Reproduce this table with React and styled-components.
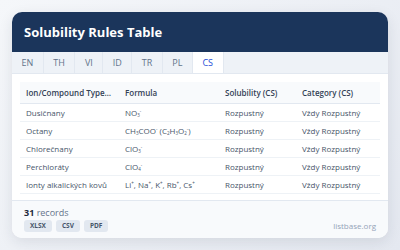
import styled, { createGlobalStyle } from "styled-components";

const GlobalStyle = createGlobalStyle`
  html, body {
    margin: 0;
    padding: 0;
  }
  body {
    font-family: "Open Sans", "Noto Sans", sans-serif;
    background: linear-gradient(135deg, #f5f7fa 0%, #e4e8f0 100%);
    width: 400px;
    height: 250px;
    overflow: hidden;
  }
`;

const Page = styled.div`
  padding: 12px;
`;

const Card = styled.div`
  width: 376px;
  height: 226px;
  background: #fff;
  border-radius: 10px;
  overflow: hidden;
  box-shadow: 0 4px 14px rgba(30, 41, 59, 0.1);
  display: flex;
  flex-direction: column;
`;

const Header = styled.div`
  height: 40px;
  background: #1b355b;
  display: flex;
  align-items: center;
  padding: 0 12px;
  h1 {
    margin: 0;
    color: #fff;
    font-size: 13px;
    font-weight: 700;
  }
`;

const Tabs = styled.ul`
  margin: 0;
  padding: 0;
  list-style: none;
  display: flex;
  height: 21px;
  background: #eef2f7;
  border-bottom: 1px solid #e2e8f0;
`;

const Tab = styled.li`
  padding: 0 9.5px;
  display: flex;
  align-items: center;
  font-size: 9px;
  color: ${(p) => (p.$active ? "#1d4ed8" : "#64748b")};
  background: ${(p) => (p.$active ? "#fff" : "transparent")};
  border-right: 1px solid #e2e8f0;
`;

const Body = styled.div`
  flex: 1;
  padding: 8px 8px 0;
`;

const Table = styled.table`
  width: 360px;
  border-collapse: collapse;
  table-layout: fixed;
  font-size: 8px;
  th {
    background: #f8fafc;
    color: #334155;
    font-weight: 600;
    text-align: left;
    height: 21px;
    padding: 0 6px;
    border-bottom: 1px solid #e2e8f0;
    white-space: nowrap;
    overflow: hidden;
    text-overflow: ellipsis;
  }
  td {
    color: #475569;
    height: 17px;
    padding: 0 6px;
    border-bottom: 1px solid #eef2f6;
    white-space: nowrap;
  }
  sub, sup {
    font-size: 4.5px;
    line-height: 0;
    vertical-align: baseline;
    position: relative;
  }
  sub {
    top: 1px;
  }
  sup {
    top: -3px;
  }
`;

const Footer = styled.div`
  height: 37px;
  background: #f8fafc;
  border-top: 1px solid #e2e8f0;
  display: flex;
  align-items: center;
  justify-content: space-between;
  padding: 0 12px;
`;

const Count = styled.div`
  font-size: 9px;
  color: #64748b;
  line-height: 11px;
  b {
    color: #1e293b;
    font-weight: 700;
  }
`;

const Exports = styled.div`
  display: flex;
  gap: 4px;
  margin-top: 2px;
`;

const Badge = styled.span`
  background: #e2e8f0;
  color: #475569;
  font-size: 6.5px;
  font-weight: 700;
  border-radius: 3px;
  padding: 2px 6px;
  line-height: 8px;
`;

const Brand = styled.span`
  font-size: 8px;
  color: #94a3b8;
  margin-top: 12px;
`;

const rows = [
  ["Dusičnany", <>NO<sub>3</sub><sup>-</sup></>],
  ["Octany", <>CH<sub>3</sub>COO<sup>-</sup> (C<sub>2</sub>H<sub>3</sub>O<sub>2</sub><sup>-</sup>)</>],
  ["Chlorečnany", <>ClO<sub>3</sub><sup>-</sup></>],
  ["Perchloráty", <>ClO<sub>4</sub><sup>-</sup></>],
  ["Ionty alkalických kovů", <>Li<sup>+</sup>, Na<sup>+</sup>, K<sup>+</sup>, Rb<sup>+</sup>, Cs<sup>+</sup></>],
];

const tabs = ["EN", "TH", "VI", "ID", "TR", "PL", "CS"];

export default function App() {
  return (
    <Page>
      <GlobalStyle />
      <Card>
        <Header>
          <h1>Solubility Rules Table</h1>
        </Header>
        <Tabs>
          {tabs.map((t) => (
            <Tab key={t} $active={t === "CS"}>
              {t}
            </Tab>
          ))}
        </Tabs>
        <Body>
          <Table>
            <colgroup>
              <col style={{ width: 99 }} />
              <col style={{ width: 100 }} />
              <col style={{ width: 77 }} />
              <col style={{ width: 84 }} />
            </colgroup>
            <thead>
              <tr>
                <th>Ion/Compound Type (CS)</th>
                <th>Formula</th>
                <th>Solubility (CS)</th>
                <th>Category (CS)</th>
              </tr>
            </thead>
            <tbody>
              {rows.map(([name, formula]) => (
                <tr key={name}>
                  <td>{name}</td>
                  <td>{formula}</td>
                  <td>Rozpustný</td>
                  <td>Vždy Rozpustný</td>
                </tr>
              ))}
            </tbody>
          </Table>
        </Body>
        <Footer>
          <div>
            <Count>
              <b>31</b> records
            </Count>
            <Exports>
              <Badge>XLSX</Badge>
              <Badge>CSV</Badge>
              <Badge>PDF</Badge>
            </Exports>
          </div>
          <Brand>listbase.org</Brand>
        </Footer>
      </Card>
    </Page>
  );
}
